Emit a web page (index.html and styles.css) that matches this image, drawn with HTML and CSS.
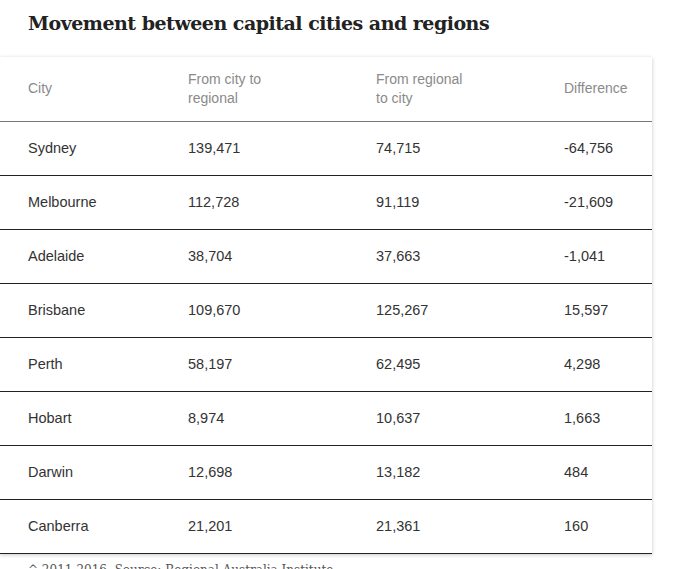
FILE: index.html
```html
<!DOCTYPE html>
<html>
<head>
<meta charset="utf-8">
<link rel="stylesheet" href="styles.css">
</head>
<body>
<h1 class="title">Movement between capital cities and regions</h1>
<div class="card">
  <table class="data">
    <thead>
      <tr>
        <th class="c1"><span class="hd">City</span></th>
        <th class="c2"><span class="hd">From city to regional</span></th>
        <th class="c3"><span class="hd">From regional to city</span></th>
        <th class="c4"><span class="hd">Difference</span></th>
      </tr>
    </thead>
    <tbody>
      <tr><td>Sydney</td><td>139,471</td><td>74,715</td><td>-64,756</td></tr>
      <tr><td>Melbourne</td><td>112,728</td><td>91,119</td><td>-21,609</td></tr>
      <tr><td>Adelaide</td><td>38,704</td><td>37,663</td><td>-1,041</td></tr>
      <tr><td>Brisbane</td><td>109,670</td><td>125,267</td><td>15,597</td></tr>
      <tr><td>Perth</td><td>58,197</td><td>62,495</td><td>4,298</td></tr>
      <tr><td>Hobart</td><td>8,974</td><td>10,637</td><td>1,663</td></tr>
      <tr><td>Darwin</td><td>12,698</td><td>13,182</td><td>484</td></tr>
      <tr><td>Canberra</td><td>21,201</td><td>21,361</td><td>160</td></tr>
    </tbody>
  </table>
</div>
<p class="caption">^ 2011-2016. Source: Regional Australia Institute</p>
</body>
</html>
```
FILE: styles.css
```css
html, body {
  margin: 0;
  padding: 0;
  background: #fff;
}
body {
  font-family: "Liberation Sans", Arial, sans-serif;
  color: #333;
}
.title {
  margin: 0;
  padding: 10px 0 0 28px;
  height: 48px;
  box-sizing: border-box;
  font-family: "DejaVu Serif", serif;
  font-weight: bold;
  font-size: 19px;
  line-height: 26px;
  color: #222;
  letter-spacing: -0.5px;
}
.card {
  width: 652px;
  margin-top: 9px;
  box-shadow: 0 1px 4px rgba(0, 0, 0, 0.22);
  background: #fff;
}
.data {
  width: 100%;
  border-collapse: collapse;
  table-layout: fixed;
}
.data th,
.data td {
  box-sizing: border-box;
  padding: 0 0 0 28px;
  vertical-align: middle;
}
.data th {
  height: 64px;
  text-align: left;
  font-weight: normal;
  font-size: 14px;
  line-height: 19px;
  color: #8a8a8a;
  border-bottom: 1px solid #777;
}
.hd {
  display: block;
  max-width: 95px;
}
.c1 { width: 160px; }
.c2 { width: 188px; }
.c3 { width: 188px; }
.data td {
  height: 54px;
  font-size: 14.5px;
  color: #333;
  border-bottom: 1px solid #222;
}
.caption {
  margin: 9px 0 0 28px;
  font-family: "DejaVu Serif", serif;
  font-size: 12px;
  color: #555;
}
```
